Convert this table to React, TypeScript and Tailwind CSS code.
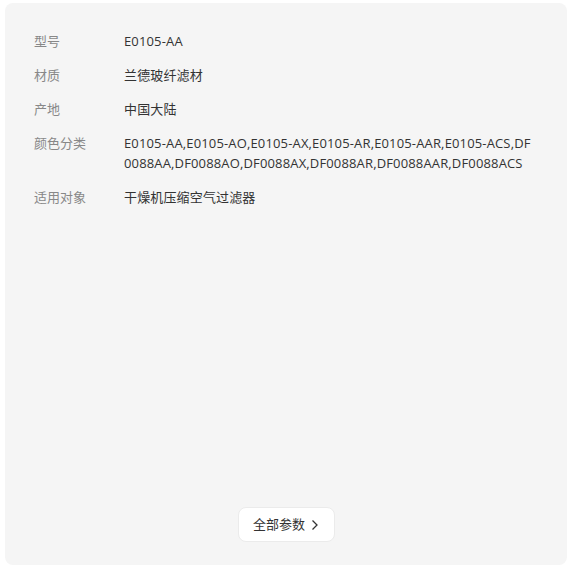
import React from 'react';

const specs: { label: string; value: string }[] = [
  { label: '型号', value: 'E0105-AA' },
  { label: '材质', value: '兰德玻纤滤材' },
  { label: '产地', value: '中国大陆' },
  {
    label: '颜色分类',
    value:
      'E0105-AA,E0105-AO,E0105-AX,E0105-AR,E0105-AAR,E0105-ACS,DF0088AA,DF0088AO,DF0088AX,DF0088AR,DF0088AAR,DF0088ACS',
  },
  { label: '适用对象', value: '干燥机压缩空气过滤器' },
];

export default function App() {
  return (
    <div className="w-[573px] h-[570px] bg-white pt-[3px] pl-[5px] font-['Open_Sans','Noto_Sans_CJK_SC',sans-serif] text-[13px]">
      <div className="w-[562px] h-[562px] bg-[#f5f5f5] rounded-lg flex flex-col pt-[28px] pb-[23px] px-[29px]">
        <div className="flex flex-col gap-[14px]">
          {specs.map((s) => (
            <div key={s.label} className="flex leading-[20px]">
              <div className="w-[90px] shrink-0 text-[#888]">{s.label}</div>
              <div className="w-[409px] text-[#333] break-all tracking-[0.15px]">{s.value}</div>
            </div>
          ))}
        </div>
        <div className="mt-auto flex justify-center">
          <button className="h-[35px] w-[97px] bg-white rounded-lg border border-[#ebebeb] flex items-center justify-center gap-[6px] text-[#333] text-[13px]">
            <span>全部参数</span>
            <svg width="8" height="12" viewBox="0 0 8 12" fill="none">
              <path d="M1.5 1.5 L6 6 L1.5 10.5" stroke="#333" strokeWidth="1.3" />
            </svg>
          </button>
        </div>
      </div>
    </div>
  );
}
